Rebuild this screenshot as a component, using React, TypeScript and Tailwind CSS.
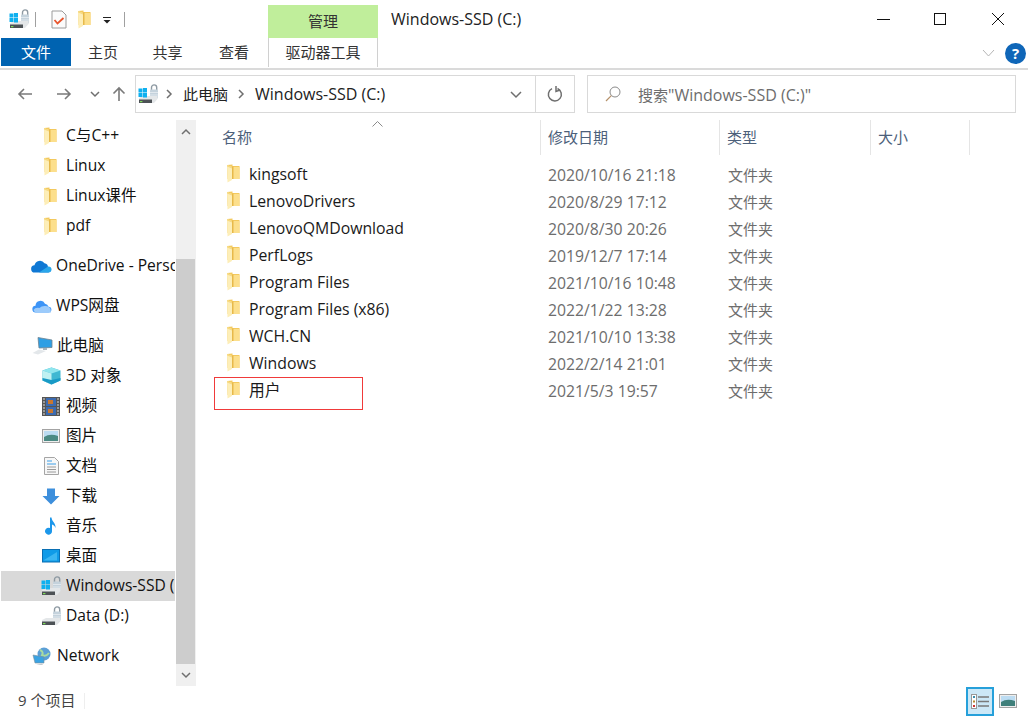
const FONT = '[font-family:"Open_Sans","Noto_Sans_CJK_SC",sans-serif]';

function FolderIcon({ className = '' }: { className?: string }) {
  return (
    <svg width="13" height="19" viewBox="0 0 13 19" className={className}>
      <path d="M0 1 L5.5 0.5 L5.5 2 L12.5 2 L12.5 15 L0.5 15 Z" fill="#f3c95e" />
      <path d="M6 3 L12.5 3 L12.5 15 L6 15 Z" fill="#fcdf8c" />
      <path d="M5 2.5 L6.5 2.5 L6.5 15 L5 15 Z" fill="#e7b94a" />
      <path d="M0 1 L5 3 L5 16 L0.5 18.5 Z" fill="#fdeeb8" />
      <path d="M0 1 L5 3 L5 4.5 L0 2.5 Z" fill="#f6d982" />
    </svg>
  );
}

function DriveIcon({ windows = false }: { windows?: boolean }) {
  return (
    <svg width="20" height="20" viewBox="0 0 20 20">
      <path d="M13.5 6 V3.5 a2.6 2.6 0 0 1 5.2 0 V6" fill="none" stroke="#8e9aa3" strokeWidth="1.4" />
      <rect x="12" y="5.5" width="8" height="9" rx="1" fill="#c4d2dc" />
      <path d="M12 8.5 H20 M12 11 H20" stroke="#e8eef2" strokeWidth="0.8" />
      <path d="M1 14 L5 12 L19.5 12 L19.5 15 L16 19 L1 19 Z" fill="#e4e7e9" />
      <path d="M1 15.5 L14 15.5 L14 19 L1 19 Z" fill="#4d5256" />
      <rect x="2" y="17" width="2.4" height="1.2" fill="#7fdc5a" />
      {windows && (
        <g fill="#0fb0ef">
          <rect x="0.5" y="4.5" width="4" height="4" />
          <rect x="5" y="4" width="4" height="4.5" />
          <rect x="0.5" y="9" width="4" height="4" />
          <rect x="5" y="9" width="4" height="4.5" />
        </g>
      )}
    </svg>
  );
}

function ListRow({ name, date }: { name: string; date: string }) {
  return (
    <div className="flex h-[27px] items-center">
      <div className="flex w-[352px] items-center pl-[31px]">
        <FolderIcon className="shrink-0 -translate-y-0.5" />
        <span className="ml-[9px] -translate-y-px truncate text-[15.8px] text-[#1a1a1a]">{name}</span>
      </div>
      <span className="w-[180px] text-[15.75px] text-[#6d6d6d]">{date}</span>
      <span className="text-[#6d6d6d]">文件夹</span>
    </div>
  );
}

function NavRow({
  icon,
  label,
  indent,
  gap,
  selected = false,
}: {
  icon: React.ReactNode;
  label: string;
  indent: string;
  gap: string;
  selected?: boolean;
}) {
  return (
    <div
      className={`flex h-[30px] items-center overflow-hidden whitespace-nowrap text-[15.6px] text-[#111] ${indent} ${gap} ${
        selected ? 'bg-[#d9d9d9]' : ''
      }`}
    >
      <span className="flex shrink-0 items-center justify-center">{icon}</span>
      <span>{label}</span>
    </div>
  );
}

const files = [
  ['kingsoft', '2020/10/16 21:18'],
  ['LenovoDrivers', '2020/8/29 17:12'],
  ['LenovoQMDownload', '2020/8/30 20:26'],
  ['PerfLogs', '2019/12/7 17:14'],
  ['Program Files', '2021/10/16 10:48'],
  ['Program Files (x86)', '2022/1/22 13:28'],
  ['WCH.CN', '2021/10/10 13:38'],
  ['Windows', '2022/2/14 21:01'],
  ['用户', '2021/5/3 19:57'],
];

function Chevron({ d, className = '' }: { d: string; className?: string }) {
  return (
    <svg width="12" height="12" viewBox="0 0 12 12" className={className}>
      <path d={d} fill="none" stroke="#6f6f6f" strokeWidth="1.5" />
    </svg>
  );
}

export default function App() {
  const folder = <FolderIcon />;
  return (
    <div className={`flex h-[716px] w-[1028px] flex-col overflow-hidden bg-white text-[15px] ${FONT}`}>
      {/* title row */}
      <div className="flex h-[38px] shrink-0 items-center">
        <div className="ml-[9px] flex items-center">
          <DriveIcon windows />
          <div className="ml-[6px] h-[15px] w-px bg-[#a0a0a0]" />
          <svg width="16" height="19" viewBox="0 0 16 19" className="ml-[15px]">
            <path d="M1 1 H11 L15 5 V18 H1 Z" fill="#fbfbfb" stroke="#9b9b9b" />
            <path d="M3.5 10 L6.5 13.5 L12.5 8" fill="none" stroke="#e8552d" strokeWidth="1.8" />
          </svg>
          <FolderIcon className="ml-[11px]" />
          <svg width="8" height="7" viewBox="0 0 8 7" className="ml-[12px] mt-[3px]">
            <rect x="0" y="0" width="8" height="1" fill="#222" />
            <path d="M0.5 3 H7.5 L4 6.5 Z" fill="#222" />
          </svg>
          <div className="ml-[13px] h-[15px] w-px bg-[#a0a0a0]" />
        </div>
        <div className="ml-[143px] flex h-[33px] w-[110px] items-center justify-center self-end bg-[#c0ee9b] text-[#333]">
          管理
        </div>
        <span className="ml-[13px] text-[16px] text-[#222]">Windows-SSD (C:)</span>
        <div className="ml-auto mr-[24px] flex items-center gap-[46px]">
          <div className="h-px w-[13px] bg-[#111]" />
          <div className="-ml-[2px] h-[12px] w-[12px] border border-[#111]" />
          <svg width="12" height="12" viewBox="0 0 12 12">
            <path d="M0 0 L12 12 M12 0 L0 12" stroke="#111" strokeWidth="1" />
          </svg>
        </div>
      </div>

      {/* ribbon tabs */}
      <div className="flex h-[32px] shrink-0 border-b-2 border-[#dadada]">
        <div className="ml-px flex h-[28px] w-[70px] items-center justify-center bg-[#0063b1] text-white">文件</div>
        <div className="flex h-[28px] w-[64px] items-center justify-center text-[#333]">主页</div>
        <div className="flex h-[28px] w-[65px] items-center justify-center text-[#333]">共享</div>
        <div className="flex h-[28px] w-[68px] items-center justify-center text-[#333]">查看</div>
        <div className="flex h-[29px] w-[110px] items-center justify-center border-x border-[#d0d0d0] text-[#333]">驱动器工具</div>
        <div className="ml-auto flex items-center gap-[10px] pr-[2px]">
          <svg width="13" height="8" viewBox="0 0 13 8">
            <path d="M1 1 L6.5 7 L12 1" fill="none" stroke="#b5b5b5" strokeWidth="1" />
          </svg>
          <div className="flex h-[21px] w-[21px] items-center justify-center rounded-full bg-[#0f66b8] text-[15px] font-bold text-white">?</div>
        </div>
      </div>

      {/* address row */}
      <div className="flex h-[50px] shrink-0 items-start pt-[5px]">
        <div className="flex h-[38px] w-[135px] items-center">
          <svg width="16" height="14" viewBox="0 0 16 14" className="ml-[17px]">
            <path d="M15 7 H2 M7 2 L2 7 L7 12" fill="none" stroke="#7a7a7a" strokeWidth="1.6" />
          </svg>
          <svg width="16" height="14" viewBox="0 0 16 14" className="ml-[23px]">
            <path d="M1 7 H14 M9 2 L14 7 L9 12" fill="none" stroke="#7a7a7a" strokeWidth="1.6" />
          </svg>
          <Chevron d="M2 4 L6 8 L10 4" className="ml-[17px]" />
          <svg width="14" height="16" viewBox="0 0 14 16" className="ml-[11px]">
            <path d="M7 15 V2 M1.5 7.5 L7 2 L12.5 7.5" fill="none" stroke="#7a7a7a" strokeWidth="1.6" />
          </svg>
        </div>
        <div className="flex h-[38px] w-[440px] items-center border border-[#d9d9d9] text-[#222]">
          <span className="ml-[2px]"><DriveIcon windows /></span>
          <Chevron d="M4 2 L8 6 L4 10" className="ml-[5px]" />
          <span className="ml-[8px]">此电脑</span>
          <Chevron d="M4 2 L8 6 L4 10" className="ml-[7px]" />
          <span className="ml-[8px] text-[16px]">Windows-SSD (C:)</span>
          <Chevron d="M1 4 L6 9 L11 4" className="ml-auto mr-[13px]" />
          <div className="flex h-full w-[39px] items-center justify-center border-l border-[#d9d9d9]">
            <svg width="16" height="18" viewBox="0 0 16 18">
              <path d="M10.5 3.5 A6.5 6.5 0 1 1 5 3.6" fill="none" stroke="#6f6f6f" strokeWidth="1.5" />
              <path d="M9 1 L9 6.5 L13 5" fill="none" stroke="#6f6f6f" strokeWidth="1.5" />
            </svg>
          </div>
        </div>
        <div className="ml-[12px] flex h-[38px] w-[429px] items-center border border-[#d9d9d9] text-[#6d6d6d]">
          <svg width="16" height="16" viewBox="0 0 16 16" className="ml-[17px]">
            <circle cx="10" cy="6" r="5" fill="none" stroke="#8a8a8a" strokeWidth="1" />
            <path d="M6.3 9.7 L1 15" stroke="#b5916a" strokeWidth="1.2" />
          </svg>
          <span className="ml-[17px] translate-y-px">
            搜索<span className="text-[16px]">"Windows-SSD (C:)"</span>
          </span>
        </div>
      </div>

      {/* main */}
      <div className="flex min-h-0 flex-1">
        <div className="flex w-[196px] shrink-0">
          <div className="w-[176px] pl-px pr-px pt-px">
            <NavRow icon={folder} label="C与C++" indent="pl-[43px]" gap="gap-[9px]" />
            <NavRow icon={folder} label="Linux" indent="pl-[43px]" gap="gap-[9px]" />
            <NavRow icon={folder} label="Linux课件" indent="pl-[43px]" gap="gap-[9px]" />
            <NavRow icon={folder} label="pdf" indent="pl-[43px]" gap="gap-[9px]" />
            <div className="mt-[10px]">
              <NavRow
                icon={
                  <svg width="21" height="14" viewBox="0 0 21 14">
                    <path d="M4 13.5 a3.6 3.6 0 0 1 -.5 -7.2 a5.5 5.5 0 0 1 10 -2 a4 4 0 0 1 3.5 4 a2.7 2.7 0 0 1 .5 5.2 Z" fill="#0f78d4" />
                    <path d="M8 13.5 L17 7.5 a3 3 0 0 1 3.5 3.5 a2.7 2.7 0 0 1 -2.5 2.5 Z" fill="#2aa6ea" />
                  </svg>
                }
                label="OneDrive - Personal"
                indent="pl-[30px]"
                gap="gap-[4px]"
              />
            </div>
            <div className="mt-[10px]">
              <NavRow
                icon={
                  <svg width="20" height="14" viewBox="0 0 20 14">
                    <path d="M4 13.5 a3.4 3.4 0 0 1 -.5 -6.8 a5 5 0 0 1 9.5 -2 a4 4 0 0 1 3.5 3 a2.9 2.9 0 0 1 0 5.8 Z" fill="#3d94f6" />
                    <path d="M1.5 11 a5 3 0 0 1 6 -2 a6 4 0 0 1 11 1 l.5 3.5 H3 Z" fill="#9ccbfb" />
                  </svg>
                }
                label="WPS网盘"
                indent="pl-[31px]"
                gap="gap-[4px]"
              />
            </div>
            <div className="mt-[10px]">
              <NavRow
                icon={
                  <svg width="21" height="18" viewBox="0 0 21 18">
                    <path d="M6 0.5 L20 3 V10.5 L7 11 Z" fill="#2f9fe4" stroke="#6f8391" strokeWidth="0.8" />
                    <path d="M11 11 L15 11 L15 13 L11 13 Z" fill="#a9b4bb" />
                    <path d="M0.5 16 L7 12.5 L14 14 L6 17.5 Z" fill="#e3e7ea" />
                  </svg>
                }
                label="此电脑"
                indent="pl-[31px]"
                gap="gap-[4px]"
              />
            </div>
            <NavRow
              icon={
                <svg width="19" height="18" viewBox="0 0 19 18">
                  <path d="M9.5 0.5 L18.5 3.5 V13.5 L9.5 17.5 L0.5 13.5 V3.5 Z" fill="#3fb8d2" />
                  <path d="M0.5 3.5 L9.5 6.5 L18.5 3.5 L9.5 0.5 Z" fill="#8fe6ee" />
                  <path d="M9.5 6.5 V17.5 L0.5 13.5 V3.5 Z" fill="#bff1f2" />
                  <path d="M0.5 11 L9.5 13 L18.5 11 V13.5 L9.5 17.5 L0.5 13.5 Z" fill="#189ac6" />
                </svg>
              }
              label="3D 对象"
              indent="pl-[41px]"
              gap="gap-[5px]"
            />
            <NavRow
              icon={
                <svg width="18" height="19" viewBox="0 0 18 19">
                  <rect width="18" height="19" fill="#555" />
                  <rect x="4" y="1" width="10" height="8" fill="#3c6bb0" />
                  <rect x="4" y="10" width="10" height="8" fill="#3c6bb0" />
                  <rect x="6" y="3" width="5" height="4" fill="#c9772f" />
                  <rect x="6" y="12" width="5" height="4" fill="#c9772f" />
                  <path d="M1 2 H3 M1 5 H3 M1 8 H3 M1 11 H3 M1 14 H3 M1 17 H3 M15 2 H17 M15 5 H17 M15 8 H17 M15 11 H17 M15 14 H17 M15 17 H17" stroke="#ddd" strokeWidth="1.2" />
                </svg>
              }
              label="视频"
              indent="pl-[41px]"
              gap="gap-[6px]"
            />
            <NavRow
              icon={
                <svg width="18" height="14" viewBox="0 0 18 14">
                  <rect x="0.5" y="0.5" width="17" height="13" fill="#eee" stroke="#a3a3a3" />
                  <rect x="2" y="2" width="14" height="10" fill="#bcdcf2" />
                  <path d="M2 8 Q8 4 16 7 V12 H2 Z" fill="#4b8a84" />
                </svg>
              }
              label="图片"
              indent="pl-[41px]"
              gap="gap-[6px]"
            />
            <NavRow
              icon={
                <svg width="15" height="18" viewBox="0 0 15 18">
                  <path d="M0.5 0.5 H10.5 L14.5 4.5 V17.5 H0.5 Z" fill="#f7f7f7" stroke="#a5a5a5" />
                  <path d="M3 4 H8 M3 7 H12" stroke="#3ea0e8" strokeWidth="1.2" />
                  <path d="M3 10 H12 M3 12.5 H12 M3 15 H12" stroke="#9a9a9a" strokeWidth="1" />
                </svg>
              }
              label="文档"
              indent="pl-[43px]"
              gap="gap-[7px]"
            />
            <NavRow
              icon={
                <svg width="18" height="17" viewBox="0 0 18 17">
                  <path d="M5 0.5 H13 V8 H17.5 L9 16.5 L0.5 8 H5 Z" fill="#3d8fdc" />
                </svg>
              }
              label="下载"
              indent="pl-[41px]"
              gap="gap-[6px]"
            />
            <NavRow
              icon={
                <svg width="12" height="18" viewBox="0 0 12 18">
                  <path d="M5 0.5 H6.5 C7 5 11 6 10.5 11 C10 9 8.5 8 7 7.5 V14 A3.5 3.5 0 1 1 5 11 Z" fill="#1c97ea" />
                </svg>
              }
              label="音乐"
              indent="pl-[44px]"
              gap="gap-[9px]"
            />
            <NavRow
              icon={
                <svg width="18" height="14" viewBox="0 0 18 14">
                  <rect x="0.5" y="0.5" width="17" height="12.5" fill="#0f9be8" stroke="#0a6fb3" />
                  <path d="M2 11 L15 3 V11.5 H2 Z" fill="#3bb6f2" />
                </svg>
              }
              label="桌面"
              indent="pl-[41px]"
              gap="gap-[6px]"
            />
            <NavRow icon={<DriveIcon windows />} label="Windows-SSD (C:)" indent="pl-[40px]" gap="gap-[5px]" selected />
            <NavRow icon={<DriveIcon />} label="Data (D:)" indent="pl-[40px]" gap="gap-[5px]" />
            <div className="mt-[10px]">
              <NavRow
                icon={
                  <svg width="20" height="19" viewBox="0 0 20 19">
                    <circle cx="12" cy="7" r="6.5" fill="#5b9fd6" />
                    <path d="M8 3 Q12 5 10 8 Q14 10 17 6" fill="none" stroke="#a8dba0" strokeWidth="2" />
                    <path d="M1 8 L12 10 V16 L3 16 Z" fill="#3aa3e3" stroke="#7d8e99" strokeWidth="0.6" />
                    <path d="M4 18 L10 16.5 L11 18 Z" fill="#c4cbd0" />
                  </svg>
                }
                label="Network"
                indent="pl-[31px]"
                gap="gap-[5px]"
              />
            </div>
          </div>
          <div className="flex w-[20px] flex-col bg-[#f0f0f0]">
            <div className="flex h-[139px] justify-center pt-[6px]">
              <Chevron d="M2 8 L6 4 L10 8" />
            </div>
            <div className="h-[405px] w-[19px] bg-[#cdcdcd]" />
            <div className="flex flex-1 items-center justify-center">
              <Chevron d="M2 4 L6 8 L10 4" />
            </div>
          </div>
        </div>

        {/* file list */}
        <div className="relative flex-1">
          <div className="flex h-[35px] items-center text-[#4c607a]">
            <div className="relative flex h-full w-[345px] items-center border-r border-[#e5e5e5] pl-[26px]">
              名称
              <svg width="11" height="6" viewBox="0 0 11 6" className="absolute left-[176px] top-[1px]">
                <path d="M0.5 5.5 L5.5 0.5 L10.5 5.5" fill="none" stroke="#8a8a8a" />
              </svg>
            </div>
            <div className="flex h-full w-[179px] items-center border-r border-[#e5e5e5] pl-[7px]">修改日期</div>
            <div className="flex h-full w-[151px] items-center border-r border-[#e5e5e5] pl-[7px]">类型</div>
            <div className="flex h-full w-[99px] items-center border-r border-[#e5e5e5] pl-[7px]">大小</div>
          </div>
          <div className="pt-[7px]">
            {files.map(([name, date]) => (
              <ListRow key={name} name={name} date={date} />
            ))}
          </div>
          {/* red annotation box */}
          <div className="absolute left-[18px] top-[257px] h-[33px] w-[149px] border border-[#f03a3a]" />
        </div>
      </div>

      {/* status bar */}
      <div className="flex h-[30px] shrink-0 items-center text-[#444]">
        <span className="ml-[18px] -translate-y-px">9 个项目</span>
        <div className="ml-[9px] h-[16px] w-px bg-[#eeeeee]" />
        <div className="ml-auto flex items-center">
          <div className="flex h-[29px] w-[28px] items-center justify-center border-2 border-[#26a0da] bg-[#cce8f7]">
            <svg width="18" height="15" viewBox="0 0 18 15">
              <rect x="0.5" y="0.5" width="5" height="14" fill="#fff" stroke="#999" />
              <rect x="2" y="2" width="2" height="2" fill="#3a8fb0" />
              <rect x="2" y="6.5" width="2" height="2" fill="#b58a2e" />
              <rect x="2" y="11" width="2" height="2" fill="#c33" />
              <path d="M7 3 H18 M7 7.5 H18 M7 12 H18" stroke="#7a7a7a" strokeWidth="1.3" />
            </svg>
          </div>
          <svg width="18" height="14" viewBox="0 0 18 14" className="ml-[5px] mr-[11px]">
            <rect x="0.5" y="0.5" width="17" height="13" fill="#eee" stroke="#a3a3a3" />
            <rect x="2" y="2" width="14" height="10" fill="#bcdcf2" />
            <path d="M2 8 Q8 4 16 7 V12 H2 Z" fill="#3f7f7a" />
          </svg>
        </div>
      </div>
    </div>
  );
}
